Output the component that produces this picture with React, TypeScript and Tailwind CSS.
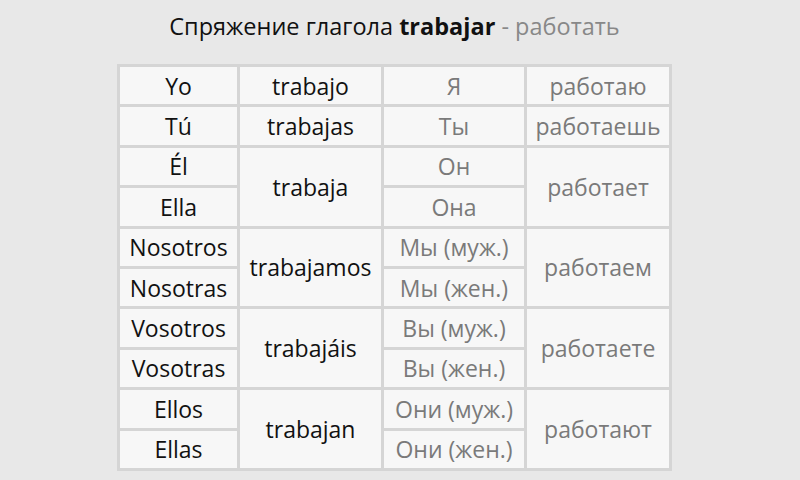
type Cell = { text: string; col: number; row: number; span?: number; muted?: boolean };

const cells: Cell[] = [
  { text: "Yo", col: 1, row: 1 },
  { text: "Tú", col: 1, row: 2 },
  { text: "Él", col: 1, row: 3 },
  { text: "Ella", col: 1, row: 4 },
  { text: "Nosotros", col: 1, row: 5 },
  { text: "Nosotras", col: 1, row: 6 },
  { text: "Vosotros", col: 1, row: 7 },
  { text: "Vosotras", col: 1, row: 8 },
  { text: "Ellos", col: 1, row: 9 },
  { text: "Ellas", col: 1, row: 10 },
  { text: "trabajo", col: 2, row: 1 },
  { text: "trabajas", col: 2, row: 2 },
  { text: "trabaja", col: 2, row: 3, span: 2 },
  { text: "trabajamos", col: 2, row: 5, span: 2 },
  { text: "trabajáis", col: 2, row: 7, span: 2 },
  { text: "trabajan", col: 2, row: 9, span: 2 },
  { text: "Я", col: 3, row: 1, muted: true },
  { text: "Ты", col: 3, row: 2, muted: true },
  { text: "Он", col: 3, row: 3, muted: true },
  { text: "Она", col: 3, row: 4, muted: true },
  { text: "Мы (муж.)", col: 3, row: 5, muted: true },
  { text: "Мы (жен.)", col: 3, row: 6, muted: true },
  { text: "Вы (муж.)", col: 3, row: 7, muted: true },
  { text: "Вы (жен.)", col: 3, row: 8, muted: true },
  { text: "Они (муж.)", col: 3, row: 9, muted: true },
  { text: "Они (жен.)", col: 3, row: 10, muted: true },
  { text: "работаю", col: 4, row: 1, muted: true },
  { text: "работаешь", col: 4, row: 2, muted: true },
  { text: "работает", col: 4, row: 3, span: 2, muted: true },
  { text: "работаем", col: 4, row: 5, span: 2, muted: true },
  { text: "работаете", col: 4, row: 7, span: 2, muted: true },
  { text: "работают", col: 4, row: 9, span: 2, muted: true },
];

export default function App() {
  return (
    <div
      className="w-[800px] h-[480px] bg-[#e8e8e8] overflow-hidden"
      style={{ fontFamily: '"Open Sans", "Noto Sans", sans-serif' }}
    >
      <div className="w-[789px] flex flex-col items-center">
        <h1 className="h-[54px] flex items-center text-[23.5px] font-normal text-[#111] mb-[10px]">
          <span>
            Спряжение глагола <b className="font-bold">trabajar</b>{" "}
            <span className="text-[#888]">- работать</span>
          </span>
        </h1>

        <div className="grid grid-cols-[117px_141px_140px_142px] grid-rows-[repeat(10,minmax(0,1fr))] h-[407px] gap-[3px] p-[3px] bg-[#d5d5d5]">
          {cells.map((c) => (
            <div
              key={c.text}
              style={{
                gridColumn: c.col,
                gridRow: `${c.row} / span ${c.span ?? 1}`,
              }}
              className={`bg-[#f7f7f7] flex items-center justify-center pt-[1px] text-[23px] leading-none whitespace-nowrap ${
                c.muted ? "text-[#7a7a7a]" : "text-[#111]"
              }`}
            >
              {c.text}
            </div>
          ))}
        </div>
      </div>
    </div>
  );
}
